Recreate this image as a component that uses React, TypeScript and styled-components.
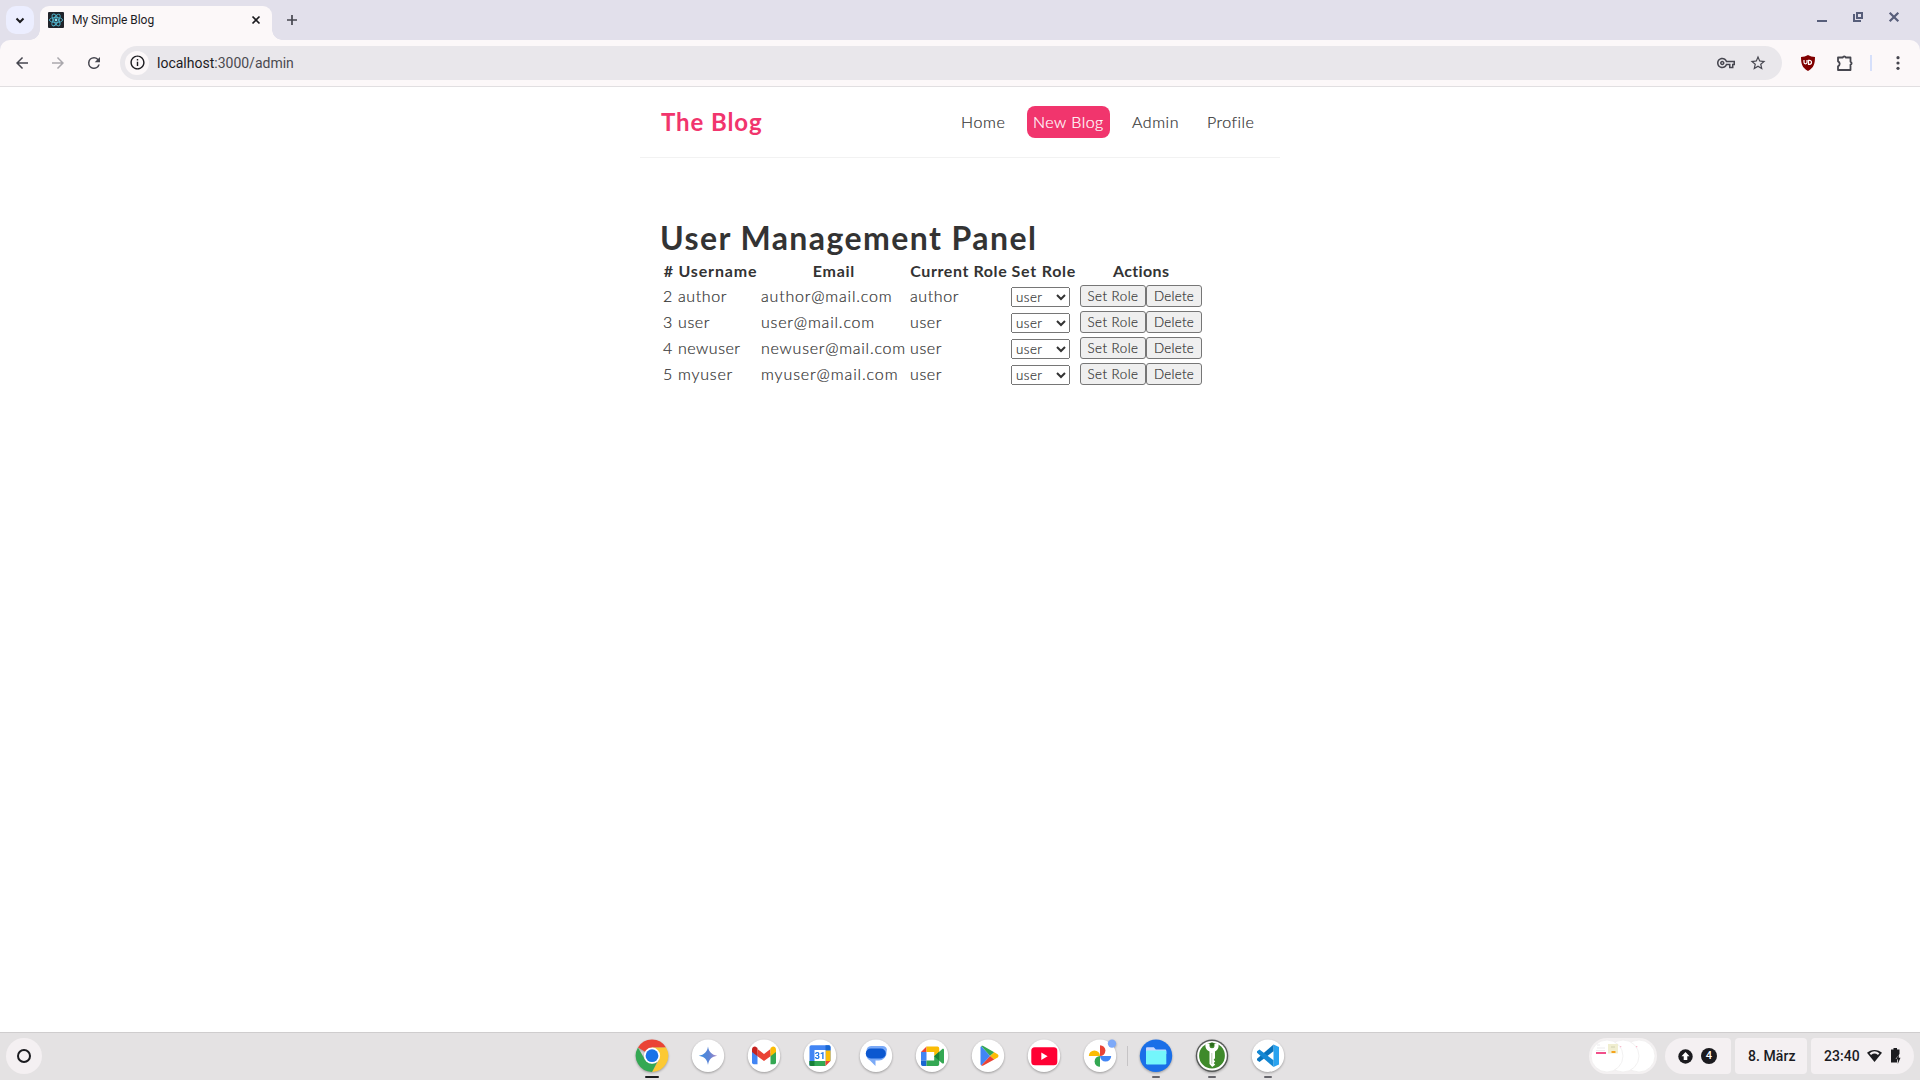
import React from "react";
import styled, { createGlobalStyle, css } from "styled-components";

const GlobalStyle = createGlobalStyle`
  *, *::before, *::after { box-sizing: border-box; }
  html, body { margin: 0; padding: 0; background: #fff; }
  body { overflow: hidden; }
`;

const uiFont = `Roboto, "Noto Sans", sans-serif`;
const pageFont = `Lato, "Open Sans", sans-serif`;

const Screen = styled.div`
  width: 1920px;
  height: 1080px;
  display: flex;
  flex-direction: column;
  font-family: ${uiFont};
  background: #fff;
`;

/* ---------- browser chrome ---------- */

const TabStrip = styled.header`
  height: 40px;
  flex: none;
  display: flex;
  background: #e2e0eb;
  padding: 6px 0 0 6px;
`;

const TabSearch = styled.button`
  width: 28px;
  height: 28px;
  border: 0;
  padding: 0;
  border-radius: 10px;
  background: #eceeff;
  display: grid;
  place-items: center;
`;

const Tab = styled.div`
  position: relative;
  width: 232px;
  height: 34px;
  margin-left: 6px;
  padding: 0 8px 6px;
  border-radius: 9px 9px 0 0;
  background: #fcf8f9;
  display: flex;
  align-items: center;
  &::before, &::after {
    content: "";
    position: absolute;
    bottom: 0;
    width: 10px;
    height: 10px;
  }
  &::before { left: -10px; background: radial-gradient(circle at 0 0, transparent 9.5px, #fcf8f9 10px); }
  &::after { right: -10px; background: radial-gradient(circle at 100% 0, transparent 9.5px, #fcf8f9 10px); }
`;

const TabTitle = styled.span`
  flex: 1;
  margin-left: 8px;
  font-size: 12px;
  line-height: 16px;
  letter-spacing: -0.04px;
  color: #1c1b1f;
`;

const IconSlot = styled.span<{ $w: number; $h?: number; $ml?: number }>`
  width: ${(p) => p.$w}px;
  height: ${(p) => p.$h ?? p.$w}px;
  margin-left: ${(p) => p.$ml ?? 0}px;
  flex: none;
  display: grid;
  place-items: center;
  svg { display: block; overflow: visible; }
`;

const WindowButtons = styled.div`
  margin-left: auto;
  margin-right: 12px;
  height: 22px;
  display: flex;
  gap: 8px;
`;

const ToolbarBack = styled.div`
  background: #e2e0eb;
  flex: none;
`;

const Toolbar = styled.div`
  height: 47px;
  display: flex;
  align-items: center;
  padding: 0 8px 1px;
  background: #fcf8f9;
  border-bottom: 1px solid #e1dfe1;
  border-radius: 10px 10px 0 0;
`;

const AddressBar = styled.div`
  width: 1662px;
  height: 34px;
  margin-left: 12px;
  padding: 0 12px 0 5px;
  border-radius: 17px;
  background: #e9e7eb;
  display: flex;
  align-items: center;
`;

const InfoBadge = styled.span`
  width: 24px;
  height: 24px;
  border-radius: 50%;
  background: #fcf8f9;
  display: grid;
  place-items: center;
`;

const Url = styled.span`
  flex: 1;
  margin-left: 8px;
  font-size: 14px;
  line-height: 20px;
  color: #4b4a50;
  b { font-weight: 400; color: #1c1b1f; }
`;

const ToolbarRule = styled.span`
  width: 2px;
  height: 16px;
  margin-left: 13px;
  background: #d6e0fb;
`;

/* ---------- page ---------- */

const Page = styled.main`
  flex: 1;
  min-height: 0;
  font-family: ${pageFont};
  font-weight: 300;
  font-size: 16px;
  line-height: 20px;
  color: #333;
  background: #fff;
`;

const thinText = css`
  -webkit-text-stroke: 0.2px currentColor;
`;

const Navbar = styled.nav`
  width: 640px;
  height: 71px;
  margin: 0 auto;
  padding: 0 20px;
  display: flex;
  align-items: center;
  border-bottom: 1px solid #f2f2f2;
`;

const Brand = styled.h1`
  margin: 0 auto 0 1px;
  font-size: 24px;
  line-height: 30px;
  font-weight: 700;
  letter-spacing: 0.9px;
  color: #f1356d;
`;

const NavLink = styled.a<{ $filled?: boolean; $w: number; $ls: number }>`
  width: ${(p) => p.$w}px;
  margin-left: 16px;
  padding: 6px;
  border-radius: 8px;
  white-space: nowrap;
  letter-spacing: ${(p) => p.$ls}px;
  ${thinText}
  ${(p) => p.$filled && css`background: #f1356d; color: #fff;`}
`;

const Content = styled.section`
  width: 600px;
  margin: 60px auto 0;
`;

const Title = styled.h2`
  margin: 0;
  font-size: 32px;
  line-height: 40px;
  font-weight: 700;
  letter-spacing: 1.43px;
  white-space: nowrap;
`;

const UserTable = styled.table`
  width: 545px;
  table-layout: fixed;
  border-collapse: separate;
  border-spacing: 2px;
  th, td { padding: 1px; white-space: nowrap; }
  th { height: 22px; font-weight: 700; text-align: center; }
  td { height: 24px; text-align: left; vertical-align: middle; ${thinText} }
`;

const Spaced = styled.span<{ $ls: number }>`
  letter-spacing: ${(p) => p.$ls}px;
  margin-right: ${(p) => -p.$ls}px;
`;

const RoleSelect = styled.select`
  display: block;
  width: 59px;
  height: 20px;
  margin: 2px 0 0;
  font-family: ${pageFont};
  font-weight: 300;
  font-size: 13.333px;
  letter-spacing: 0.46px;
  color: #333;
`;

const Actions = styled.div`
  display: flex;
`;

const ActionButton = styled.button<{ $w: number; $ls: number }>`
  width: ${(p) => p.$w}px;
  height: 22px;
  padding: 0;
  border: 1px solid #767676;
  border-radius: 3px;
  background: #efefef;
  font-family: ${pageFont};
  font-weight: 300;
  font-size: 13.333px;
  letter-spacing: ${(p) => p.$ls}px;
  color: #333;
  ${thinText}
`;

/* ---------- shelf ---------- */

const Shelf = styled.footer`
  height: 48px;
  flex: none;
  display: grid;
  grid-template-columns: 635px 1fr 331px;
  border-top: 1px solid #cfcdce;
  background: #e4e2e3;
`;

const Launcher = styled.span`
  width: 36px;
  height: 36px;
  margin: 5px 0 0 6px;
  border-radius: 50%;
  background: #f4f0f2;
  display: grid;
  place-items: center;
  &::after {
    content: "";
    width: 14px;
    height: 14px;
    border: 2px solid #1b1b1f;
    border-radius: 50%;
  }
`;

const AppRow = styled.div`
  display: flex;
  padding-top: 6px;
`;

const AppItem = styled.div<{ $bar?: number }>`
  width: 34px;
  height: 40px;
  margin-right: 22px;
  display: flex;
  flex-direction: column;
  align-items: center;
  svg { display: block; overflow: visible; flex: none; filter: drop-shadow(0 1px 1px rgba(0, 0, 0, 0.32)); }
  &::after {
    content: "";
    margin-top: 3px;
    width: ${(p) => p.$bar ?? 0}px;
    height: 2px;
    border-radius: 1px;
    background: ${(p) => (p.$bar === 14 ? "#1b1b1f" : "#66656b")};
  }
`;

const AppRule = styled.span`
  width: 1px;
  height: 20px;
  margin: 7px 11px 0 -12px;
  background: #c6c4c6;
`;

const Tray = styled.div`
  display: flex;
  gap: 4px;
  padding-top: 5px;
`;

const Previews = styled.div`
  width: 68px;
  height: 36px;
  margin-right: 4px;
  border-radius: 18px;
  background: #f4f1f2;
  display: grid;
  place-items: center;
`;

const TrayPill = styled.div<{ $w: number; $side?: "left" | "right" }>`
  width: ${(p) => p.$w}px;
  height: 36px;
  display: flex;
  align-items: center;
  border-radius: ${(p) => (p.$side === "left" ? "18px 4px 4px 18px" : p.$side === "right" ? "4px 18px 18px 4px" : "4px")};
  padding-left: 13px;
  background: #f4f0f2;
  color: #1b1b1f;
  font-size: 14px;
  font-weight: 500;
  letter-spacing: 0.07px;
  white-space: nowrap;
`;

const Count = styled.span`
  width: 16px;
  height: 16px;
  margin-left: 8px;
  border-radius: 50%;
  background: #1b1b1f;
  color: #fff;
  font-size: 11px;
  line-height: 16px;
  text-align: center;
`;

const P = ({ d, size, fill = "#46464f" }: { d: string; size: number; fill?: string }) => (
  <svg width={size} height={size} viewBox="0 0 24 24"><path d={d} fill={fill} /></svg>
);

const ARROW = "M20 11H7.83l5.59-5.59L12 4l-8 8 8 8 1.41-1.41L7.83 13H20v-2z";
const RELOAD = "M17.65 6.35A7.96 7.96 0 0 0 12 4a8 8 0 1 0 7.73 10h-2.08A6 6 0 1 1 12 6c1.66 0 3.14.69 4.22 1.78L13 11h7V4l-2.35 2.35z";
const INFO = "M11 7h2v2h-2zm0 4h2v6h-2zm1-9C6.48 2 2 6.48 2 12s4.48 10 10 10 10-4.48 10-10S17.52 2 12 2zm0 18c-4.41 0-8-3.59-8-8s3.59-8 8-8 8 3.59 8 8-3.59 8-8 8z";
const STAR = "M22 9.24l-7.19-.62L12 2 9.19 8.63 2 9.24l5.46 4.73L5.82 21 12 17.27 18.18 21l-1.63-7.03L22 9.24zM12 15.4l-3.76 2.27 1-4.28-3.32-2.88 4.38-.38L12 6.1l1.71 4.04 4.38.38-3.32 2.88 1 4.28L12 15.4z";
const KEY = "M22 19h-6v-4h-2.68c-1.14 2.42-3.6 4-6.32 4-3.86 0-7-3.14-7-7s3.14-7 7-7c2.72 0 5.17 1.58 6.32 4H24v6h-2v4zm-4-2h2v-4h2v-2H11.94l-.23-.67C11.01 8.34 9.11 7 7 7c-2.76 0-5 2.24-5 5s2.24 5 5 5c2.11 0 4.01-1.34 4.71-3.33l.23-.67H18v4zM7 15c-1.65 0-3-1.35-3-3s1.35-3 3-3 3 1.35 3 3-1.35 3-3 3zm0-4c-.55 0-1 .45-1 1s.45 1 1 1 1-.45 1-1-.45-1-1-1z";

const Favicon = () => (
  <svg width="16" height="16" viewBox="0 0 16 16">
    <rect width="16" height="16" rx="1" fill="#20232a" />
    <g fill="none" stroke="#4fb3cc" strokeWidth="0.9">
      <ellipse cx="8" cy="8" rx="6.6" ry="2.6" />
      <ellipse cx="8" cy="8" rx="6.6" ry="2.6" transform="rotate(60 8 8)" />
      <ellipse cx="8" cy="8" rx="6.6" ry="2.6" transform="rotate(120 8 8)" />
    </g>
    <circle cx="8" cy="8" r="1.4" fill="#8be4f7" />
  </svg>
);

const Disc = ({ children, fill = "#fff" }: { children: React.ReactNode; fill?: string }) => (
  <svg width="34" height="34" viewBox="0 0 34 34"><circle cx="17" cy="16.7" r="16.2" fill={fill} />{children}</svg>
);

const ChromeIcon = () => (
  <svg width="34" height="34" viewBox="0 0 34 34">
    <path d="M17 16.7 2.97 8.6A16.2 16.2 0 0 1 31.03 8.6H17z" fill="#ea4335" />
    <path d="M31.03 8.6A16.2 16.2 0 0 1 17 32.9L24 20.75 17 8.6z" fill="#fcc934" />
    <path d="M17 32.9A16.2 16.2 0 0 1 2.97 8.6L10 20.75l7 4.05 5-1.5z" fill="#34a853" />
    <circle cx="17" cy="16.7" r="8.1" fill="#fff" />
    <circle cx="17" cy="16.7" r="6.4" fill="#1a73e8" />
  </svg>
);

const Gemini = () => (
  <Disc>
    <defs>
      <linearGradient id="gem" x1="0" y1="0" x2="1" y2="0">
        <stop offset="0" stopColor="#3b8fe0" />
        <stop offset=".55" stopColor="#5b83d6" />
        <stop offset="1" stopColor="#b08bc4" />
      </linearGradient>
    </defs>
    <path d="M17 7.5C17.9 13 20.7 15.8 26.2 16.7 20.7 17.6 17.9 20.4 17 25.9 16.1 20.4 13.3 17.6 7.8 16.7 13.3 15.8 16.1 13 17 7.5z" fill="url(#gem)" />
  </Disc>
);

const Gmail = () => (
  <Disc>
    <path d="M5 10.5v13a1.700 1.700 0 0 0 1.700 1.700h3.800V14.500z" fill="#4285f4" />
    <path d="M29 10.5v13a1.700 1.700 0 0 1-1.700 1.700h-3.800V14.500z" fill="#34a853" />
    <path d="M10.5 17.2V10l6.500 4.900 6.500-4.900v7.200L17 22z" fill="#ea4335" />
    <path d="M5 10.5c0-2.400 2.700-3.700 4.500-2.300l1 .8v8.200L5 13z" fill="#c5221f" />
    <path d="M29 10.5c0-2.400-2.700-3.700-4.500-2.300l-1 .8v8.200L29 13z" fill="#fbbc04" />
  </Disc>
);

const Calendar = () => (
  <Disc>
    <path d="M6.500 8a1.800 1.800 0 0 1 1.800-1.800h17.400A1.800 1.800 0 0 1 27.500 8v14H22V11H12v16H6.500z" fill="#4285f4" />
    <path d="M22.500 6.200h3.200A1.800 1.800 0 0 1 27.500 8v3.500h-5z" fill="#1967d2" />
    <path d="M22.500 11.500h5V22h-5z" fill="#fbbc04" />
    <path d="M6.500 22h16v5H8.300a1.800 1.800 0 0 1-1.800-1.800z" fill="#34a853" />
    <path d="M6.500 22h5v5H8.300a1.800 1.800 0 0 1-1.800-1.800z" fill="#188038" />
    <path d="M22.500 22h5l-5 5z" fill="#ea4335" />
    <path d="M11.500 11h11v11h-11z" fill="#fff" />
    <text x="17" y="20" textAnchor="middle" fontFamily="Roboto, sans-serif" fontWeight="700" fontSize="9" fill="#1a73e8">31</text>
  </Disc>
);

const Messages = () => (
  <Disc>
    <path d="M12 7h12a4 4 0 0 1 3.600 5.600A8 8 0 0 1 20 21.500h-3.500V27l-5.500-5.500A7.500 7.500 0 0 1 7.500 12 5 5 0 0 1 12 7z" fill="#7baaf7" />
    <rect x="6.800" y="9.500" width="20" height="10" rx="5" fill="#0b57d0" />
  </Disc>
);

const Meet = () => (
  <Disc>
    <path d="M11.500 7.500V13H6z" fill="#ea4335" />
    <path d="M11.500 7.500h11A1.700 1.700 0 0 1 24.200 9.200V14l-5 3v-4h-7.700z" fill="#fbbc04" />
    <path d="M6 13h5.500v8.500H6z" fill="#4285f4" />
    <path d="M6 21.500h5.500V27H7.700A1.700 1.700 0 0 1 6 25.300z" fill="#1967d2" />
    <path d="M11.500 21.500h7.700v-4.500l5-3v11.300a1.700 1.700 0 0 1-1.700 1.700h-11z" fill="#34a853" />
    <path d="m19.200 17.200 7.800-7c1-.8 2-.4 2 .7v12.600c0 1.100-1 1.500-2 .7z" fill="#34a853" />
    <path d="m19.200 17.200 5-4.500v9z" fill="#188038" />
  </Disc>
);

const Play = () => (
  <Disc>
    <path d="m10.300 7 8.800 10-8.800 9.500c-.6-.4-.8-.9-.8-1.500V8.500c0-.6.2-1.200.8-1.500z" fill="#4285f4" />
    <path d="M10.300 7c.6-.4 1.300-.4 2 0l10.900 6.200-4.100 3.800z" fill="#34a853" />
    <path d="m23.200 13.200 3.400 2c1.200.8 1.200 2.400 0 3.200l-3.400 2-4.100-3.400z" fill="#fbbc04" />
    <path d="m10.300 26.500 8.800-9.500 4.100 3.400-10.900 6.100c-.7.400-1.400.4-2 0z" fill="#ea4335" />
  </Disc>
);

const YouTube = () => (
  <Disc>
    <rect x="4.300" y="8.300" width="26" height="18" rx="3.500" fill="#ff0033" />
    <path d="m14.300 13.500 6.300 3.800-6.300 3.800z" fill="#fff" />
  </Disc>
);

const Photos = () => (
  <Disc>
    <path d="M17 17V6.200a5.400 5.400 0 0 1 0 10.800z" fill="#ea4335" />
    <path d="M17 17h11.200a5.500 5.500 0 0 1-11.200 0z" fill="#4285f4" />
    <path d="M17 17v10.800A5.400 5.400 0 0 1 17 17z" fill="#34a853" />
    <path d="M17 17H5.800a5.500 5.500 0 0 1 11.200 0z" fill="#fbbc04" />
    <circle cx="29" cy="4.600" r="4.200" fill="#7da9f8" />
  </Disc>
);

const Files = () => (
  <Disc fill="#1a6fe8">
    <path d="M7 9.500c0-.8.500-1.300 1.300-1.300h6.500l2 2.200h9c.9 0 1.500.5 1.500 1.300V15H7z" fill="#c7d8ff" />
    <rect x="7" y="11.500" width="20.300" height="14" rx="1.200" fill="#74f6fb" />
  </Disc>
);

const KeePass = () => (
  <Disc fill="#575a58">
    <circle cx="17" cy="16.700" r="14.800" fill="#fff" />
    <circle cx="17" cy="16.700" r="12.900" fill="#3f8a2b" />
    <path d="M11 4c-1.500 3-.2 7 3.500 8.500V25l2.700 3 3-2.200-1.500-1.800 1.500-1.500-1.500-1.700 1.300-1.500V12.500C23.200 11 24.500 7 23 4l-3.500.8v2a2.500 2.500 0 0 1-5 0v-2z" fill="#fff" />
    <path d="M16.800 14v11" stroke="#b9c9b3" strokeWidth="1" />
    <circle cx="17" cy="5.500" r="2" fill="#2b6a1c" />
  </Disc>
);

const VSCode = () => (
  <Disc>
    <path d="M22.500 5.500 28 8v17.500L22.500 28z" fill="#2aa3ef" />
    <path d="M22.500 5.500v6.700L8.500 23 6 21.200v-1.500z" fill="#0873bd" />
    <path d="M22.500 28v-6.700L8.500 10.500 6 12.300v1.500z" fill="#1488d4" />
  </Disc>
);

const PreviewStack = () => (
  <svg width="68" height="36" viewBox="0 0 68 36">
    <g fill="#fff" stroke="#efedee" strokeWidth=".8">
      <circle cx="50" cy="18" r="16" />
      <circle cx="34" cy="18" r="16" />
      <circle cx="18" cy="18" r="16" />
    </g>
    <path d="M7 14h10v2H7z" fill="#f1508a" />
    <path d="M8 10h8M7 12.500h9M8 7h3" stroke="#e8e6e8" strokeWidth=".8" />
    <path d="M19 6h10v9.500H19z" fill="#f0eed0" />
    <path d="M22.500 13h4v2h-4z" fill="#f6a31c" />
    <path d="M22 9h4" stroke="#c9c9a8" strokeWidth=".8" />
    <path d="M31 8h1.300v1.300H31zM47 8h1.300v1.300H47z" fill="#f9bccd" />
  </svg>
);

const UpdateBadge = () => (
  <svg width="15" height="15" viewBox="0 0 15 15">
    <circle cx="7.500" cy="7.500" r="7.200" fill="#1b1b1f" />
    <path d="m7.500 3 4 4.200H9.300V11H5.700V7.200H3.500z" fill="#fff" />
  </svg>
);

const Wifi = () => (
  <svg width="15" height="12" viewBox="0 0 15 12">
    <path d="M7.500 0C10.600 0 13.100 1.100 15 2.800L7.500 12 0 2.800C1.900 1.100 4.400 0 7.500 0z" fill="#1b1b1f" />
    <path d="M2.600 3.200a7.800 7.800 0 0 1 9.800 0L11 4.900a5.700 5.700 0 0 0-7 0z" fill="#f4f0f2" />
  </svg>
);

const Battery = () => (
  <svg width="10" height="16" viewBox="0 0 10 16">
    <path d="M2.500 0h3.500v1.500h2.500V6L4.500 11H6v3.500H0v-13h2.500z" fill="#1b1b1f" />
    <path d="M7.800 6.500v3.300H9.500L6.800 16v-4.500H5z" fill="#1b1b1f" />
  </svg>
);

/* ---------- data ---------- */

const columns = [
  { label: "#", width: 13, ls: 0 },
  { label: "Username", width: 81, ls: 0.84 },
  { label: "Email", width: 147, ls: 0.68 },
  { label: "Current Role", width: 99, ls: 0.59 },
  { label: "Set Role", width: 67, ls: 0.75 },
  { label: "Actions", width: 124, ls: 0.34 },
];

const users = [
  { id: "2", name: "author", nls: 0.6, email: "author@mail.com", els: 0.81, role: "author" },
  { id: "3", name: "user", nls: 0.6, email: "user@mail.com", els: 0.81, role: "user" },
  { id: "4", name: "newuser", nls: 0.51, email: "newuser@mail.com", els: 0.75, role: "user" },
  { id: "5", name: "myuser", nls: 0.78, email: "myuser@mail.com", els: 0.88, role: "user" },
];

export default function App() {
  return (
    <Screen>
      <GlobalStyle />
      <TabStrip>
        <TabSearch><svg width="10" height="7" viewBox="0 0 10 7"><path d="m1.500 1.500 3.500 3.500 3.500-3.500" fill="none" stroke="#1b1b1f" strokeWidth="2" /></svg></TabSearch>
        <Tab>
          <Favicon />
          <TabTitle>My Simple Blog</TabTitle>
          <IconSlot $w={16}><svg width="8" height="8" viewBox="0 0 8 8"><path d="m.5.5 7 7m0-7-7 7" stroke="#1b1b1f" strokeWidth="1.700" /></svg></IconSlot>
        </Tab>
        <IconSlot $w={28} $ml={6}><svg width="10" height="10" viewBox="0 0 10 10"><path d="M5 0v10M0 5h10" stroke="#46464f" strokeWidth="1.700" /></svg></IconSlot>
        <WindowButtons>
          <IconSlot $w={28} $h={22}><svg width="10" height="10" viewBox="0 0 10 10"><path d="M0 8h10v2H0z" fill="#575e7a" /></svg></IconSlot>
          <IconSlot $w={28} $h={22}><svg width="10" height="10" viewBox="0 0 10 10"><path d="M4 1h5v5H4zM1 2v7h7" fill="none" stroke="#575e7a" strokeWidth="2" /></svg></IconSlot>
          <IconSlot $w={28} $h={22}><svg width="10" height="10" viewBox="0 0 10 10"><path d="m.7.7 8.600 8.600m0-8.600L.7 9.300" stroke="#575e7a" strokeWidth="2.200" /></svg></IconSlot>
        </WindowButtons>
      </TabStrip>
      <ToolbarBack>
        <Toolbar>
          <IconSlot $w={28}><P d={ARROW} size={18} /></IconSlot>
          <IconSlot $w={28} $ml={8}><svg width="18" height="18" viewBox="0 0 24 24"><path d={ARROW} fill="#aaa8ad" transform="matrix(-1 0 0 1 24 0)" /></svg></IconSlot>
          <IconSlot $w={28} $ml={8}><P d={RELOAD} size={18} /></IconSlot>
          <AddressBar>
            <InfoBadge><P d={INFO} size={17} fill="#1b1b1f" /></InfoBadge>
            <Url><b>localhost</b>:3000/admin</Url>
            <IconSlot $w={24}><P d={KEY} size={18} /></IconSlot>
            <IconSlot $w={24} $ml={8}><P d={STAR} size={18} /></IconSlot>
          </AddressBar>
          <IconSlot $w={24} $ml={14}>
            <svg width="14" height="16" viewBox="0 0 14 16">
              <path d="M7 0c2 1.300 4.500 1.900 7 2-.1 7-1 10.500-7 14C1 12.500.1 9 0 2c2.500-.1 5-.7 7-2z" fill="#800000" />
              <path d="M3 5v2.300a1.500 1.500 0 0 0 3 0V5M7.500 5.300v4h1a2 2 0 0 0 0-4z" fill="none" stroke="#fff" strokeWidth="1.200" />
            </svg>
          </IconSlot>
          <IconSlot $w={24} $ml={13}>
            <svg width="18" height="18" viewBox="0 0 18 18">
              <path d="M2 3.500h4.800a1.500 1.500 0 0 1 2.900 0H14.500v4.300a1.500 1.500 0 0 1 0 2.900V16H2v-3.700a2.700 2.700 0 0 0 0-5z" fill="none" stroke="#46464f" strokeWidth="1.800" strokeLinejoin="round" />
            </svg>
          </IconSlot>
          <ToolbarRule />
          <IconSlot $w={24} $ml={14}>
            <svg width="4" height="14" viewBox="0 0 4 14"><g fill="#46464f"><circle cx="2" cy="1.700" r="1.600" /><circle cx="2" cy="7" r="1.600" /><circle cx="2" cy="12.300" r="1.600" /></g></svg>
          </IconSlot>
        </Toolbar>
      </ToolbarBack>

      <Page>
        <Navbar>
          <Brand>The Blog</Brand>
          <NavLink $w={56} $ls={0.65}>Home</NavLink>
          <NavLink $w={83} $ls={0.47} $filled>New Blog</NavLink>
          <NavLink $w={59} $ls={0.53}>Admin</NavLink>
          <NavLink $w={59} $ls={0.49}>Profile</NavLink>
        </Navbar>
        <Content>
          <Title>User Management Panel</Title>
          <UserTable>
            <colgroup>{columns.map((c) => <col key={c.label} width={c.width} />)}</colgroup>
            <thead>
              <tr>{columns.map((c) => <th key={c.label}><Spaced $ls={c.ls}>{c.label}</Spaced></th>)}</tr>
            </thead>
            <tbody>
              {users.map((u) => (
                <tr key={u.id}>
                  <td>{u.id}</td>
                  <td><Spaced $ls={u.nls}>{u.name}</Spaced></td>
                  <td><Spaced $ls={u.els}>{u.email}</Spaced></td>
                  <td><Spaced $ls={0.6}>{u.role}</Spaced></td>
                  <td><RoleSelect defaultValue="user"><option>user</option></RoleSelect></td>
                  <td>
                    <Actions>
                      <ActionButton $w={66} $ls={0.48}>Set Role</ActionButton>
                      <ActionButton $w={56} $ls={0.27}>Delete</ActionButton>
                    </Actions>
                  </td>
                </tr>
              ))}
            </tbody>
          </UserTable>
        </Content>
      </Page>

      <Shelf>
        <Launcher />
        <AppRow>
          <AppItem $bar={14}><ChromeIcon /></AppItem>
          <AppItem><Gemini /></AppItem>
          <AppItem><Gmail /></AppItem>
          <AppItem><Calendar /></AppItem>
          <AppItem><Messages /></AppItem>
          <AppItem><Meet /></AppItem>
          <AppItem><Play /></AppItem>
          <AppItem><YouTube /></AppItem>
          <AppItem><Photos /></AppItem>
          <AppRule />
          <AppItem $bar={8}><Files /></AppItem>
          <AppItem $bar={8}><KeePass /></AppItem>
          <AppItem $bar={8}><VSCode /></AppItem>
        </AppRow>
        <Tray>
          <Previews><PreviewStack /></Previews>
          <TrayPill $w={66} $side="left"><UpdateBadge /><Count>4</Count></TrayPill>
          <TrayPill $w={72}>8. März</TrayPill>
          <TrayPill $w={103} $side="right">
            23:40
            <IconSlot $w={15} $h={12} $ml={7}><Wifi /></IconSlot>
            <IconSlot $w={10} $h={16} $ml={9}><Battery /></IconSlot>
          </TrayPill>
        </Tray>
      </Shelf>
    </Screen>
  );
}
